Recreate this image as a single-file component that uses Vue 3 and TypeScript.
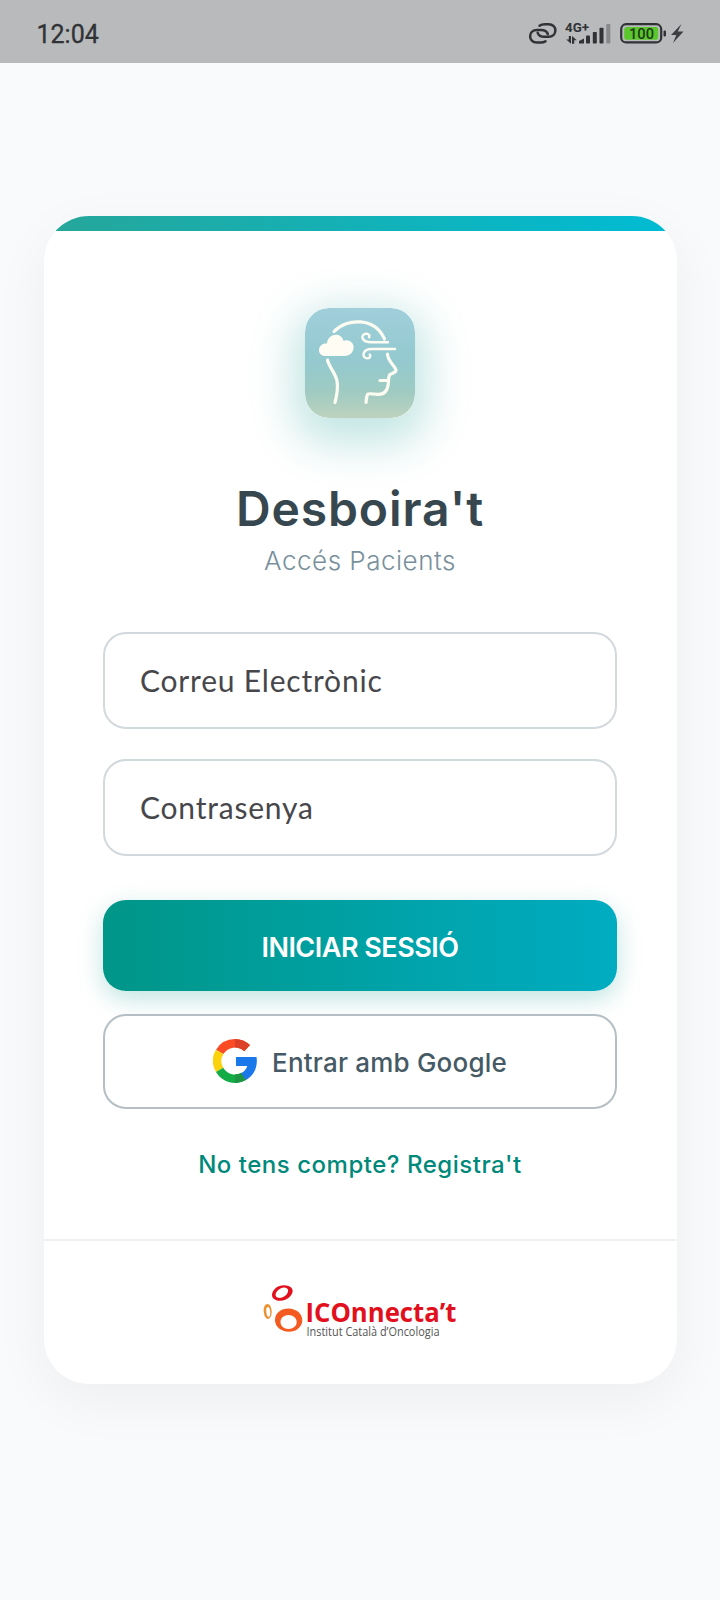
<script setup lang="ts">
import { ref } from 'vue'

interface Field {
  id: string
  label: string
}

const time = ref('12:04')
const fields: Field[] = [
  { id: 'email', label: 'Correu Electrònic' },
  { id: 'password', label: 'Contrasenya' },
]
</script>

<template>
  <div class="screen">
    <header class="status">
      <span class="time">{{ time }}</span>
      <svg class="status-icons" width="160" height="26" viewBox="527 20 160 26">
        <g fill="none" stroke="#303236" stroke-width="2.5" stroke-linecap="round">
          <path d="M539.500 25.800Q541.500 24.200 545 24.200h3.500c9.300 0 9 12.600 0 12.600H544.500c-3.500 0-6-1.600-6.800-4" />
          <path d="M545.500 41.200q-1.700 1.400-5 1.400h-3.500c-9.300 0-9-12.600 0-12.600h4c3.500 0 6 1.600 6.800 4" />
        </g>
        <text x="565" y="31.500" class="net" textLength="24" lengthAdjust="spacingAndGlyphs">4G+</text>
        <g fill="#303236">
          <path d="M568.800 36h2.200v7.800l-4.800-4.300h2.600zM572 43.800V36l4.800 4.300h-2.600v3.500z" />
          <path d="M579 41l5-2.500v5H579z" />
          <rect x="586" y="35.500" width="4" height="8" rx=".8" />
          <rect x="592.800" y="32" width="4" height="11.500" rx=".8" />
          <rect x="599.500" y="27.800" width="4" height="15.700" rx=".8" />
        </g>
        <rect x="606.300" y="24" width="4" height="19.500" rx=".8" fill="#86888b" />
        <rect x="621.200" y="24.200" width="40" height="18.200" rx="5" fill="none" stroke="#303236" stroke-width="2.200" />
        <rect x="624.200" y="27" width="34" height="12.800" rx="2.500" fill="#5bc72c" />
        <rect x="663.500" y="30.500" width="2.500" height="6" rx="1" fill="#303236" />
        <text x="629" y="39" class="level" textLength="25" lengthAdjust="spacingAndGlyphs">100</text>
        <path d="M681.500 24L671 35h5.300L673 43l10.500-11.500h-5.700z" fill="#3c3e42" />
      </svg>
    </header>

    <main class="card">
      <div class="accent"></div>
      <section class="body">
        <svg class="app-icon" viewBox="0 0 110 110">
          <defs>
            <linearGradient id="sky" x1="0" y1="0" x2="0" y2="1">
              <stop offset="0" stop-color="#a0cfdb" />
              <stop offset=".48" stop-color="#93c9cf" />
              <stop offset=".76" stop-color="#9fcbc2" />
              <stop offset="1" stop-color="#bdd2be" />
            </linearGradient>
          </defs>
          <rect width="110" height="110" rx="24" fill="url(#sky)" />
          <g fill="none" stroke="#fdfcf3" stroke-width="3.200" stroke-linecap="round" stroke-linejoin="round">
            <path d="M29 23.500C42 9.500 70 9.500 79.500 31" />
            <path d="M22.500 52c2 8 8 13 9.500 21s-.2 14-2 21.500" />
            <path d="M83 34.300H67c-12 0-11.500-8.800-5.500-8.600 3 .3 3.400 2.300 2.600 3.600" stroke-width="2.400" />
            <path d="M90 41H67c-11 0-10 9.700-4.500 9.400 3-.3 3.300-2.800 2.300-4" stroke-width="2.400" />
            <path d="M82.500 46c0 7 7 11 8.500 16 .6 3-5 3-6.500 5-1.800 4-.5 8-1.800 12-1.500 6-5.500 7.500-9.700 7.300-3.500-.4-9-1-10-.3-1.600 1.500-1.500 5-2 8.500M75 72.500h7.500" />
          </g>
          <path d="M20 48c-8 0-8.500-12.500 2-12.700 1-10 14-11.500 16.500-2.500 5.500-2.300 11 2 10 7.500-.6 5-4.500 7.700-9 7.700z" fill="#fffcf3" />
        </svg>
        <h1 class="title"><span>Desboira't</span></h1>
        <p class="subtitle"><span>Accés Pacients</span></p>

        <div v-for="f in fields" :key="f.id" class="field" :class="f.id"><span>{{ f.label }}</span></div>

        <button class="primary" type="button"><span>INICIAR SESSIÓ</span></button>
        <button class="google" type="button">
          <svg width="44" height="44" viewBox="0 0 44 44">
            <path d="M22 0a22 22 0 0 1 15 6l-5.700 6.300A13.500 13.500 0 0 0 10.400 15L3 10.800A22 22 0 0 1 22 0z" fill="#fb4b25" />
            <path d="M22 0a22 22 0 0 1 15 6l-5.700 6.300A13.500 13.500 0 0 0 22 8.600z" fill="#dc4127" />
            <path d="M3 10.800L10.400 15a13.500 13.500 0 0 0-.2 13.800L3 33a22 22 0 0 1 0-22.200z" fill="#fbd20b" />
            <path d="M3 33l7.200-4.200A13.500 13.500 0 0 0 28 34l5.300 6.800A22 22 0 0 1 3 33z" fill="#12ab45" />
            <path d="M22 35.500a13.500 13.500 0 0 0 7-2l4 7.500a22 22 0 0 1-11 3z" fill="#1f9443" />
            <path d="M23 18h20.500c1.500 8.500-1.800 18.300-10.500 23l-4.800-6.800c2.700-1.400 5.200-4 6.100-7.200H23z" fill="#1b78ea" />
          </svg>
          <span>Entrar amb Google</span>
        </button>
        <a class="register"><span>No tens compte? Registra't</span></a>
      </section>
      <footer class="foot">
        <svg class="logo" width="200" height="68" viewBox="260 1276 200 68">
          <g fill="none">
            <path fill="#e20f1d" fill-rule="evenodd" d="M273.500 1298.500c-4-4 1-13 10-13.200 9 0 11.500 5.500 7 10.700-4 5.300-13 6.500-17 2.500zm2.800-1.700c2.500 2.300 7.500.8 10-2 2.500-3 2.600-6.300-.8-7.100-6-.9-12 6-9.200 9.100z" />
            <path fill="#ed9030" fill-rule="evenodd" d="M263.700 1311c-.2-4 1.500-7 3.700-7 2.300 0 4.100 3.200 4.300 7.300.2 4-1.500 7.700-3.800 7.700-2.300 0-4-3.800-4.200-8zm2.500.5c.2 3 1.300 5.500 2.500 5.400 1.300-.1 1.700-2.700 1.500-5.300-.2-2.700-1.300-4.700-2.500-4.600-1.200.1-1.700 2-1.500 4.500z" />
            <path fill="#f35b20" fill-rule="evenodd" d="M275 1320c0-7 6-11.500 13.500-11.500s13.800 5 13.800 11.700-6 11.500-13.500 11.500S275 1327 275 1320zm5.500 2c0 4 3.500 7 8 7s8.200-3 8.200-7-3.700-7-8.200-7-8 3-8 7z" />
          </g>
          <text x="305.500" y="1321.500" class="brand" textLength="151" lengthAdjust="spacingAndGlyphs">ICOnnecta’t</text>
          <text x="306.500" y="1336.300" class="tagline" textLength="133" lengthAdjust="spacingAndGlyphs">Institut Català d’Oncologia</text>
        </svg>
      </footer>
    </main>
  </div>
</template>

<style>
body {
  margin: 0;
  background: #f8fafc;
}
</style>

<style scoped>
.screen {
  box-sizing: border-box;
  width: 720px;
  height: 1600px;
  overflow: hidden;
  background: #f8fafc;
  font-family: Inter, 'Liberation Sans', sans-serif;
}
.status {
  box-sizing: border-box;
  height: 63px;
  padding: 5px 33px 0 36.5px;
  display: flex;
  align-items: center;
  justify-content: space-between;
  background: #b9babc;
}
.status-icons {
  margin-bottom: 2px;
}
.time {
  font: 400 25px/30px Roboto, sans-serif;
  -webkit-text-stroke: 0.3px #303236;
  padding-top: 2px;
  color: #303236;
}
.net {
  font: 700 12px Roboto, sans-serif;
  fill: #303236;
}
.level {
  font: 500 15px Roboto, sans-serif;
  fill: #1d3a18;
}
.card {
  width: 633px;
  height: 1168px;
  margin: 153px auto 0;
  border-radius: 45px;
  overflow: hidden;
  background: #fff;
  box-shadow: 0 16px 56px rgba(0, 0, 0, 0.05);
  display: flex;
  flex-direction: column;
}
.accent {
  height: 15px;
  background: linear-gradient(90deg, #26a69a, #00bcd4);
}
.body {
  flex: 1;
  padding: 77px 59.5px 0;
  display: flex;
  flex-direction: column;
  align-items: center;
}
.app-icon {
  width: 110px;
  height: 110px;
  border-radius: 24px;
  box-shadow: 0 14px 44px 12px rgba(0, 150, 136, 0.24);
}
.title {
  margin: 61px 0 0;
  font-size: 48px;
  line-height: 60px;
  font-weight: 600;
  letter-spacing: 0.9px;
  color: #37474f;
}
.subtitle {
  margin: 6px 0 0;
  font-size: 26px;
  line-height: 32px;
  font-weight: 300;
  letter-spacing: 0.5px;
  color: #78909c;
}
.field {
  box-sizing: border-box;
  width: 514px;
  height: 97px;
  border: 2px solid #d2d9dd;
  border-radius: 23px;
  padding: 0 35px 2px;
  display: flex;
  align-items: center;
  font: 400 30px/36px Lato, sans-serif;
  letter-spacing: 0.8px;
  color: #47474b;
}
.email {
  margin-top: 55px;
}
.password {
  margin-top: 30px;
}
.primary,
.google {
  box-sizing: border-box;
  width: 514px;
  border-radius: 23px;
  display: flex;
  align-items: center;
  justify-content: center;
  font-family: inherit;
  padding: 0;
}
.primary {
  height: 91px;
  margin-top: 44px;
  padding-top: 3px;
  border: 0;
  background: linear-gradient(90deg, #009688, #00acc1);
  box-shadow: 0 8px 24px rgba(0, 150, 136, 0.25);
  color: #fff;
  font-size: 27px;
  font-weight: 600;
  letter-spacing: -0.5px;
}
.google {
  height: 95px;
  margin-top: 23px;
  border: 2px solid #b4bec4;
  background: #fff;
  gap: 15px;
  color: #455a64;
  font-size: 26px;
  font-weight: 500;
  letter-spacing: 0.2px;
}
.google svg {
  margin-bottom: 1px;
}
.google span {
  padding-top: 1px;
}
.register {
  margin-top: 40px;
  font-size: 24px;
  line-height: 32px;
  font-weight: 500;
  letter-spacing: 0.52px;
  color: #00897b;
}
.foot {
  box-sizing: border-box;
  height: 145px;
  border-top: 2px solid #eff1f3;
  padding-top: 35px;
  display: flex;
  justify-content: center;
  align-items: flex-start;
}
.logo {
  overflow: visible;
}
.brand {
  font: 700 27.500px 'Open Sans', sans-serif;
  fill: #e20f1d;
}
.tagline {
  font: 400 11.700px 'Open Sans', sans-serif;
  fill: #555;
}
</style>
